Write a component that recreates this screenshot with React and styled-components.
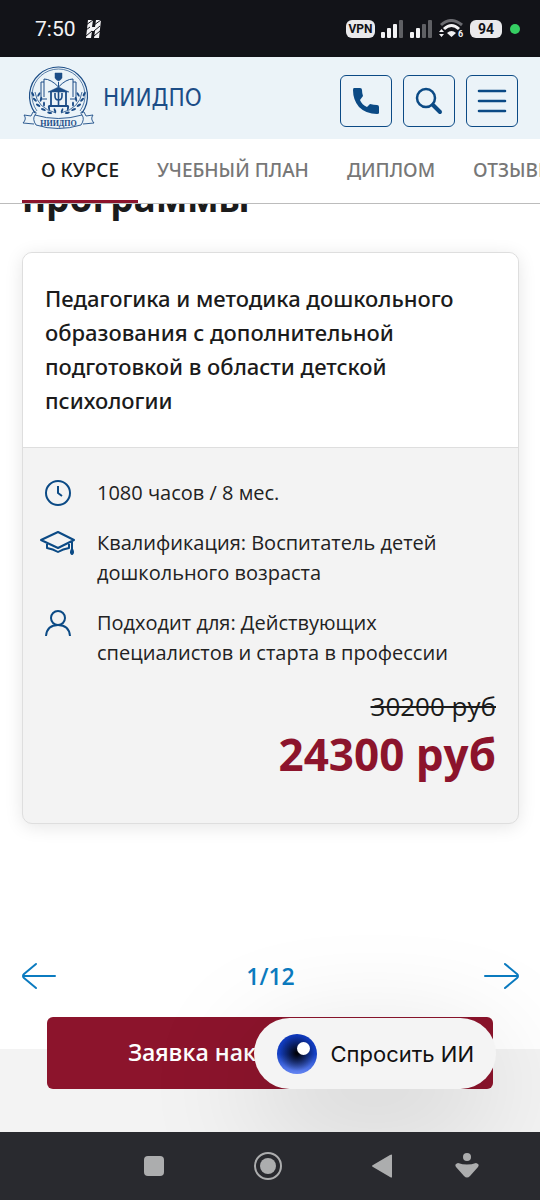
import React from "react";
import styled, { createGlobalStyle } from "styled-components";

const Global = createGlobalStyle`
  *, *::before, *::after { box-sizing: border-box; }
  body { margin: 0; background: #fff; color: #1b1b1b; font-family: "Open Sans", "Noto Sans", sans-serif; }
  button { font: inherit; color: inherit; border: 0; padding: 0; background: none; cursor: pointer; }
  h1, h2, h3, p, ul { margin: 0; padding: 0; }
  svg { display: block; flex: none; }
`;

const Page = styled.div`
  display: flex;
  flex-direction: column;
  min-height: 100vh;
`;

const StatusBar = styled.div`
  display: flex;
  align-items: center;
  justify-content: space-between;
  height: 57px;
  padding: 0 20px 0 35px;
  background: #121318;
  color: #f2f2f4;
  font-family: Roboto, sans-serif;
`;

const StatusGroup = styled.div`
  display: flex;
  align-items: center;
  gap: ${(p) => p.$gap}px;
`;

const Clock = styled.time`
  font-size: 21px;
  line-height: 24px;
`;

const StatusChip = styled.span`
  min-width: ${(p) => p.$width}px;
  height: 18px;
  border-radius: 6px;
  background: #e9e9eb;
  color: #121318;
  font-size: ${(p) => p.$size}px;
  font-weight: 700;
  line-height: 18px;
  text-align: center;
`;

const LiveDot = styled.span`
  width: 10px;
  height: 10px;
  margin-left: 2px;
  border-radius: 50%;
  background: #35cf62;
`;

const Header = styled.header`
  display: flex;
  align-items: center;
  justify-content: space-between;
  height: 82px;
  padding: 6px 22px 0 22px;
  background: #ebf3f8;
  box-shadow: 0 1px 3px rgba(0, 0, 0, 0.08);
`;

const Brand = styled.a`
  display: flex;
  align-items: center;
  gap: 8px;
  margin-top: -6px;
  color: #1c4d87;
  text-decoration: none;
`;

const Wordmark = styled.span`
  font-family: "Liberation Sans Narrow", "DejaVu Sans Condensed", sans-serif;
  font-size: 24px;
  line-height: 32px;
`;

const HeaderActions = styled.div`
  display: flex;
  gap: 11px;
`;

const IconButton = styled.button`
  display: grid;
  place-items: center;
  width: 52px;
  height: 52px;
  border: 1px solid #0b4a85;
  border-radius: 6px;
  color: #0b4a85;
`;

const Tabs = styled.nav`
  position: relative;
  display: flex;
  flex: none;
  height: 65px;
  padding-left: 22px;
  overflow: hidden;
  background: #fff;
  border-bottom: 1px solid #bcbcbc;
`;

const Tab = styled.a`
  flex: none;
  padding: 18px 19px 0;
  border-bottom: 3px solid ${(p) => (p.$active ? "#8c142c" : "transparent")};
  color: ${(p) => (p.$active ? "#1b1b1b" : "#777")};
  font-family: "Noto Sans", sans-serif;
  font-size: 19px;
  font-weight: 500;
  line-height: 26px;
  text-decoration: none;
`;

const Main = styled.main`
  position: relative;
  display: flex;
  flex: 1;
  flex-direction: column;
  overflow: hidden;
`;

const Programs = styled.section`
  padding: 0 21px 55px 22px;
  background: #fff;
`;

const Heading = styled.h2`
  margin-top: -34px;
  font-size: 37px;
  font-weight: 700;
  line-height: 56px;
`;

const Card = styled.article`
  margin-top: 26px;
  border: 1px solid #dedede;
  border-radius: 10px;
  background: #f3f3f3;
  box-shadow: 0 3px 18px rgba(0, 0, 0, 0.1);
  overflow: hidden;
`;

const CardTitle = styled.h3`
  padding: 28px 22px 30px;
  border-bottom: 1px solid #dedede;
  background: #fff;
  font-family: "Noto Sans", sans-serif;
  font-size: 22px;
  font-weight: 500;
  line-height: 34px;
`;

const Facts = styled.ul`
  display: flex;
  flex-direction: column;
  gap: 20px;
  padding: 30px 22px 0 16px;
  list-style: none;
`;

const Fact = styled.li`
  display: flex;
  gap: 20px;
  font-size: 20px;
  line-height: 30px;
  color: #222;

  svg { color: #0b4a85; }
`;

const Prices = styled.div`
  display: flex;
  flex-direction: column;
  align-items: flex-end;
  padding: 20px 22px 39px;
`;

const OldPrice = styled.s`
  font-size: 26px;
  line-height: 36px;
  text-decoration-thickness: 2px;
`;

const Price = styled.strong`
  color: #8c142c;
  font-size: 44px;
  font-weight: 700;
  line-height: 60px;
`;

const Pager = styled.div`
  display: flex;
  align-items: center;
  justify-content: space-between;
  height: 36px;
  margin-top: 134px;
  color: #0b7bc0;
  font-size: 23px;
  font-weight: 600;
`;

const NextSection = styled.section`
  flex: 1;
  min-height: 83px;
  background: #f3f3f3;
`;

const Apply = styled.button`
  position: absolute;
  right: 47px;
  bottom: 43px;
  left: 47px;
  height: 72px;
  padding-bottom: 2px;
  border-radius: 6px;
  background: #8c142c;
  color: #fff;
  font-size: 23px;
  font-weight: 600;
`;

const AskAI = styled.button`
  position: absolute;
  right: 44px;
  bottom: 43px;
  display: flex;
  align-items: center;
  gap: 14px;
  height: 71px;
  padding: 0 22px 0 23px;
  border-radius: 36px;
  background: #f4f4f4;
  box-shadow: 0 32px 120px rgba(0, 0, 0, 0.18);
  color: #111;
  font-family: Inter, sans-serif;
  font-size: 22px;
`;

const Orb = styled.span`
  position: relative;
  width: 40px;
  height: 40px;
  border-radius: 50%;
  background: radial-gradient(circle at 50% 48%, #01030c 4%, rgba(1, 3, 12, 0) 62%), linear-gradient(#0d36b8, #1440c4 50%, #6485f2);

  &::after {
    content: "";
    position: absolute;
    top: 8px;
    right: 7px;
    width: 13px;
    height: 13px;
    border-radius: 50%;
    background: #fff;
  }
`;

const SystemNav = styled.nav`
  display: grid;
  grid-template-columns: 114fr 114fr 85fr 30px;
  align-items: center;
  justify-items: start;
  height: 68px;
  padding: 0 58px 0 139px;
  background: #292a2f;
  color: #acadae;
`;

function Bars({ lit }) {
  return (
    <svg width="23" height="18" viewBox="0 0 23 18" fill="#f2f2f4">
      {[0, 1, 2, 3].map((i) => (
        <rect key={i} x={i * 6} y={12 - i * 4} width="4" height={6 + i * 4} rx="1" opacity={i < lit ? 1 : 0.35} />
      ))}
    </svg>
  );
}

function StripedH() {
  return (
    <svg width="15" height="18" viewBox="0 0 15 18">
      <path d="M2 0H7L6 7H9L10 0H15L13 18H8L9 11H6L5 18H0Z" fill="#f2f2f4" />
      <path d="M0 5 7 0M0 10 4 7M0 16 6 11M8 5 15 0M8 11 14 6M8 16 14 11" stroke="#121318" strokeWidth="1" />
    </svg>
  );
}

function Wifi() {
  return (
    <svg width="25" height="19" viewBox="0 0 25 19" fill="none">
      <path d="M2 6Q12 -3 23 6" stroke="#6a6b70" strokeWidth="3" />
      <path d="M5 10Q12.500 3 20 10" stroke="#f2f2f4" strokeWidth="3" />
      <path d="M8 14Q12.500 10 17 14L12.500 18Z" fill="#f2f2f4" />
      <path d="M0 13 2.500 10 5 13ZM0 15 2.500 18 5 15Z" fill="#f2f2f4" />
      <text x="19" y="18" fill="#f2f2f4" fontFamily="Roboto" fontSize="9" fontWeight="700">6</text>
    </svg>
  );
}

function Crest() {
  return (
    <svg width="73" height="66" viewBox="0 0 73 66" fill="none" stroke="#1c4d87">
      <path d="M13 48A29 29 0 1 1 60 48" strokeWidth="1.200" />
      <path d="M15 46A26.500 26.500 0 1 1 58 46" strokeWidth=".7" />
      <path d="M33 8H40V13Q39 15 36.500 16Q34 15 33 13Z" fill="#1c4d87" strokeWidth=".5" />
      <path d="M36.500 22Q29 14 22 14V32M36.500 22Q44 14 51 14V32M36.500 17V22M22 17H19V34H25M51 17H54V34H48" strokeWidth="1" />
      <path d="M26 27 36.500 22 47 27Z" fill="#1c4d87" strokeWidth=".5" />
      <path d="M29 27V40M44 27V40M27 41H46" strokeWidth="1.800" />
      <path d="M33 28V31Q33 35 36.500 35Q40 35 40 31V28M36.500 26V40" strokeWidth="1.600" />
      <path d="M13 27Q15 43 34 48M60 27Q58 43 39 48" strokeWidth=".8" />
      <g fill="#1c4d87" stroke="none">
        {[[13, 29, 60], [15, 34, 45], [18, 39, 30], [23, 43, 20], [29, 46, 10]].map(([x, y, a]) => (
          <g key={x}>
            <ellipse cx={x - 1} cy={y + 2} rx="2.500" ry="1.100" transform={`rotate(${a} ${x} ${y})`} />
            <ellipse cx={x + 3} cy={y - 1} rx="2.500" ry="1" transform={`rotate(${a + 60} ${x + 3} ${y})`} />
            <ellipse cx={74 - x} cy={y + 2} rx="2.500" ry="1.100" transform={`rotate(${-a} ${73 - x} ${y})`} />
            <ellipse cx={70 - x} cy={y - 1} rx="2.500" ry="1" transform={`rotate(${-a - 60} ${70 - x} ${y})`} />
          </g>
        ))}
      </g>
      <path d="M13 50Q36 57 60 50Q63 54 59 60Q36 67 14 60Q10 54 13 50Z" fill="#ebf3f8" strokeWidth=".9" />
      <path d="M13 50Q16 46 11 47L9 51L2 50Q5 54 1 58L12 59M60 50Q57 46 62 47L64 51L71 50Q68 54 72 58L61 59" strokeWidth=".9" />
      <text x="36.500" y="61" fill="#1c4d87" stroke="none" fontFamily="Liberation Serif" fontWeight="700" fontSize="8" textAnchor="middle">НИИДПО</text>
    </svg>
  );
}

function Arrow({ back }) {
  return (
    <svg width="35" height="28" viewBox="0 0 35 28" fill="none" stroke="currentColor" strokeWidth="2" strokeLinecap="round" strokeLinejoin="round">
      <path d={back ? "M33 14H1M14 2 2 12Q0 14 2 16L14 26" : "M1 14H34M21 2 33 12Q35 14 33 16L21 26"} />
    </svg>
  );
}

const factIcons = {
  clock: (
    <>
      <circle cx="19" cy="15" r="12" />
      <path d="M19 8V15L23 18" />
    </>
  ),
  cap: <path d="M2 12 19 4 35 12 19 20ZM8 16V20Q14 21 19 24Q24 21 30 20V16M33 13V21M33 21Q31 25 33 26Q35 25 33 21Z" />,
  person: (
    <>
      <circle cx="19" cy="10" r="7" />
      <path d="M7 28Q8 17 19 17Q30 17 31 28" />
    </>
  ),
};

const facts = [
  ["clock", "1080 часов / 8 мес."],
  ["cap", "Квалификация: Воспитатель детей дошкольного возраста"],
  ["person", "Подходит для: Действующих специалистов и старта в профессии"],
];

const tabs = ["О КУРСЕ", "УЧЕБНЫЙ ПЛАН", "ДИПЛОМ", "ОТЗЫВЫ"];

export default function App() {
  return (
    <Page>
      <Global />
      <StatusBar>
        <StatusGroup $gap={10}>
          <Clock>7:50</Clock>
          <StripedH />
        </StatusGroup>
        <StatusGroup $gap={6}>
          <StatusChip $width={29} $size={12}>VPN</StatusChip>
          <Bars lit={3} />
          <Bars lit={2} />
          <Wifi />
          <StatusChip $width={32} $size={14}>94</StatusChip>
          <LiveDot />
        </StatusGroup>
      </StatusBar>

      <Header>
        <Brand href="#home">
          <Crest />
          <Wordmark>НИИДПО</Wordmark>
        </Brand>
        <HeaderActions>
          <IconButton aria-label="Позвонить">
            <svg width="26" height="26" viewBox="0 0 26 26" fill="currentColor">
              <path d="M1 0H7Q9 0 9 2Q9 5 10 8L7 12Q9 17 14 19L17 16Q21 17 24 17Q26 17 26 19V25Q26 26 24 26Q13 26 6 19Q0 12 0 2Q0 0 1 0Z" />
            </svg>
          </IconButton>
          <IconButton aria-label="Поиск">
            <svg width="28" height="28" viewBox="0 0 28 28" fill="none" stroke="currentColor" strokeLinecap="round">
              <circle cx="11" cy="11" r="9" strokeWidth="2.500" />
              <path d="M18 18 25 25" strokeWidth="4" />
            </svg>
          </IconButton>
          <IconButton aria-label="Меню">
            <svg width="30" height="24" viewBox="0 0 30 24" fill="none" stroke="currentColor" strokeWidth="2.600" strokeLinecap="round">
              <path d="M2 2H28M2 12H28M2 22H28" />
            </svg>
          </IconButton>
        </HeaderActions>
      </Header>

      <Tabs>
        {tabs.map((label, i) => (
          <Tab key={label} href={`#tab-${i}`} $active={i === 0}>{label}</Tab>
        ))}
      </Tabs>

      <Main>
        <Programs>
          <Heading>программы</Heading>
          <Card>
            <CardTitle>Педагогика и методика дошкольного образования с дополнительной подготовкой в области детской психологии</CardTitle>
            <Facts>
              {facts.map(([icon, text]) => (
                <Fact key={icon}>
                  <svg width="38" height="30" viewBox="0 0 38 30" fill="none" stroke="currentColor" strokeWidth="2" strokeLinejoin="round">
                    {factIcons[icon]}
                  </svg>
                  <span>{text}</span>
                </Fact>
              ))}
            </Facts>
            <Prices>
              <OldPrice>30200 руб</OldPrice>
              <Price>24300 руб</Price>
            </Prices>
          </Card>
          <Pager>
            <button aria-label="Назад"><Arrow back /></button>
            <span>1/12</span>
            <button aria-label="Вперёд"><Arrow /></button>
          </Pager>
        </Programs>
        <NextSection />
        <Apply>Заявка наконсультацию</Apply>
        <AskAI>
          <Orb />
          <span>Спросить ИИ</span>
        </AskAI>
      </Main>

      <SystemNav>
        <button aria-label="Недавние">
          <svg width="30" height="30" viewBox="0 0 30 30" fill="currentColor"><rect x="5" y="5" width="20" height="20" rx="4" /></svg>
        </button>
        <button aria-label="Домой">
          <svg width="30" height="30" viewBox="0 0 30 30" fill="currentColor">
            <circle cx="15" cy="15" r="13" fill="none" stroke="currentColor" strokeWidth="2" />
            <circle cx="15" cy="15" r="8" />
          </svg>
        </button>
        <button aria-label="Вернуться">
          <svg width="30" height="30" viewBox="0 0 30 30" fill="currentColor"><path d="M6 14 23 4Q25 3 25 4V26Q25 27 23 26L6 16Q4 15 6 14Z" /></svg>
        </button>
        <button aria-label="Специальные возможности">
          <svg width="30" height="30" viewBox="0 0 30 30" fill="currentColor">
            <circle cx="15" cy="6" r="4" />
            <path d="M6 12Q15 15 24 12Q28 13 26 16L18 25Q15 28 12 25L4 16Q2 13 6 12Z" />
          </svg>
        </button>
      </SystemNav>
    </Page>
  );
}
